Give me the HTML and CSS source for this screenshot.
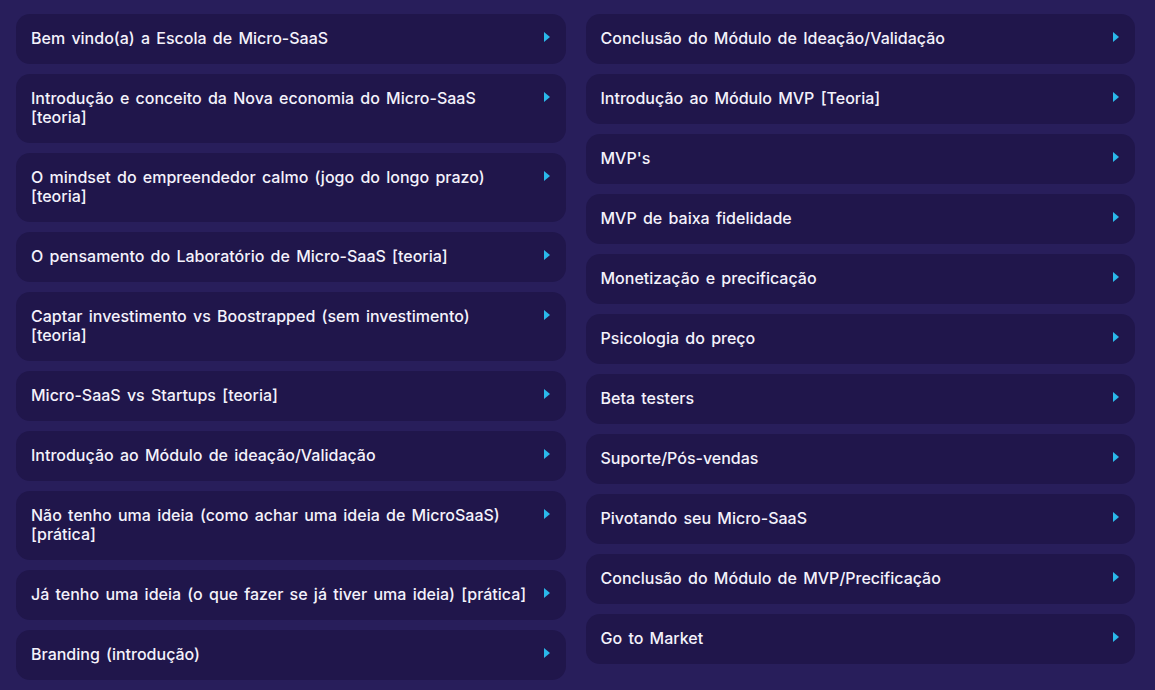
FILE: index.html
```html
<!DOCTYPE html>
<html lang="pt-BR">
<head>
    <meta charset="UTF-8">
    <meta name="viewport" content="width=device-width, initial-scale=1.0">
    <title>Escola de Micro-SaaS</title>
    <link rel="stylesheet" href="styles.css">
</head>
<body>
    <div class="modules">
        <div class="column">
            <div class="lesson"><span class="title">Bem vindo(a) a Escola de Micro-SaaS</span><span class="arrow"></span></div>
            <div class="lesson"><span class="title">Introdução e conceito da Nova economia do Micro-SaaS [teoria]</span><span class="arrow"></span></div>
            <div class="lesson"><span class="title">O mindset do empreendedor calmo (jogo do longo prazo) [teoria]</span><span class="arrow"></span></div>
            <div class="lesson"><span class="title">O pensamento do Laboratório de Micro-SaaS [teoria]</span><span class="arrow"></span></div>
            <div class="lesson"><span class="title">Captar investimento vs Boostrapped (sem investimento) [teoria]</span><span class="arrow"></span></div>
            <div class="lesson"><span class="title">Micro-SaaS vs Startups [teoria]</span><span class="arrow"></span></div>
            <div class="lesson"><span class="title">Introdução ao Módulo de ideação/Validação</span><span class="arrow"></span></div>
            <div class="lesson"><span class="title">Não tenho uma ideia (como achar uma ideia de MicroSaaS) [prática]</span><span class="arrow"></span></div>
            <div class="lesson"><span class="title">Já tenho uma ideia (o que fazer se já tiver uma ideia) [prática]</span><span class="arrow"></span></div>
            <div class="lesson"><span class="title">Branding (introdução)</span><span class="arrow"></span></div>
        </div>
        <div class="column">
            <div class="lesson"><span class="title">Conclusão do Módulo de Ideação/Validação</span><span class="arrow"></span></div>
            <div class="lesson"><span class="title">Introdução ao Módulo MVP [Teoria]</span><span class="arrow"></span></div>
            <div class="lesson"><span class="title">MVP's</span><span class="arrow"></span></div>
            <div class="lesson"><span class="title">MVP de baixa fidelidade</span><span class="arrow"></span></div>
            <div class="lesson"><span class="title">Monetização e precificação</span><span class="arrow"></span></div>
            <div class="lesson"><span class="title">Psicologia do preço</span><span class="arrow"></span></div>
            <div class="lesson"><span class="title">Beta testers</span><span class="arrow"></span></div>
            <div class="lesson"><span class="title">Suporte/Pós-vendas</span><span class="arrow"></span></div>
            <div class="lesson"><span class="title">Pivotando seu Micro-SaaS</span><span class="arrow"></span></div>
            <div class="lesson"><span class="title">Conclusão do Módulo de MVP/Precificação</span><span class="arrow"></span></div>
            <div class="lesson"><span class="title">Go to Market</span><span class="arrow"></span></div>
        </div>
    </div>
</body>
</html>
```

FILE: styles.css
```css
body {
    margin: 0;
    background-color: #281e5b;
    font-family: Inter, "Noto Sans", sans-serif;
    color: #f4f2fb;
}
.modules {
    display: grid;
    grid-template-columns: 1fr 1fr;
    gap: 20px;
    padding: 14px 20px 0 16px;
}
.column {
    display: flex;
    flex-direction: column;
    gap: 10px;
}
.lesson {
    display: flex;
    align-items: flex-start;
    justify-content: space-between;
    gap: 14px;
    background-color: #20164b;
    border-radius: 14px;
    padding: 15px 15px 16px 15px;
    font-size: 16px;
    font-weight: 500;
    line-height: 19px;
    word-spacing: 2px;
}
.title {
    flex: 1;
}
.arrow {
    flex: none;
    width: 0;
    height: 0;
    margin-top: 3px;
    margin-right: 1px;
    border-top: 5px solid transparent;
    border-bottom: 5px solid transparent;
    border-left: 6px solid #2ab8ea;
}
```
